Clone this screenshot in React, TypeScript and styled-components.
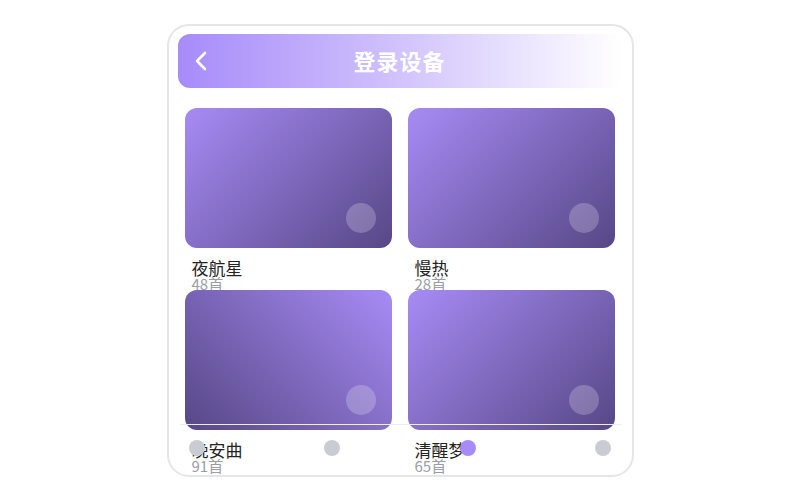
import styled, { createGlobalStyle } from "styled-components";

const GlobalStyle = createGlobalStyle`
  html, body {
    margin: 0;
    padding: 0;
    background: #ffffff;
    font-family: "Noto Sans CJK SC", "Noto Sans", sans-serif;
  }
`;

const playlists = [
  { name: "夜航星", count: 48, flip: false },
  { name: "慢热", count: 28, flip: false },
  { name: "晚安曲", count: 91, flip: true },
  { name: "清醒梦", count: 65, flip: false },
];

const tabs = [false, false, true, false];

function App() {
  return (
    <>
      <GlobalStyle />
      <Page>
        <Phone>
          <Header>
            <BackButton>
              <svg width="14" height="22" viewBox="0 0 14 22" fill="none">
                <path
                  d="M11 3L3 11L11 19"
                  stroke="#ffffff"
                  strokeWidth="2.6"
                  strokeLinecap="round"
                  strokeLinejoin="round"
                />
              </svg>
            </BackButton>
            <Title>登录设备</Title>
          </Header>
          <Grid>
            {playlists.map((item) => (
              <Cell key={item.name}>
                <Cover $flip={item.flip}>
                  <PlayDot />
                </Cover>
                <Name>{item.name}</Name>
                <Count>{item.count}首</Count>
              </Cell>
            ))}
          </Grid>
          <TabBar>
            {tabs.map((active, i) => (
              <TabDot key={i} $active={active} />
            ))}
          </TabBar>
        </Phone>
      </Page>
    </>
  );
}

export default App;

const Page = styled.div`
  width: 800px;
  height: 500px;
  display: flex;
  justify-content: center;
  padding-top: 24px;
  box-sizing: border-box;
`;

const Phone = styled.div`
  position: relative;
  width: 467px;
  height: 453px;
  box-sizing: border-box;
  border: 2px solid #e6e6ea;
  border-radius: 22px;
  overflow: hidden;
  background: #ffffff;
  padding: 8px 10px 0 9px;
`;

const Header = styled.div`
  position: relative;
  height: 54px;
  border-radius: 12px;
  background: linear-gradient(90deg, #a78bfa 0%, #cdbdfc 45%, #ffffff 100%);
  display: flex;
  align-items: center;
  justify-content: center;
`;

const BackButton = styled.div`
  position: absolute;
  left: 16px;
  top: 16px;
  width: 14px;
  height: 22px;
  display: flex;
`;

const Title = styled.h1`
  margin: 0;
  color: #ffffff;
  font-size: 22px;
  font-weight: 700;
  letter-spacing: 1px;
  line-height: 1;
  padding-bottom: 2px;
`;

const Grid = styled.div`
  display: grid;
  grid-template-columns: 207px 207px;
  column-gap: 16px;
  padding: 20px 0 0 7px;
`;

const Cell = styled.div`
  display: flex;
  flex-direction: column;
`;

const Cover = styled.div<{ $flip: boolean }>`
  position: relative;
  height: 140px;
  border-radius: 12px;
  background: ${(p) =>
    p.$flip
      ? "linear-gradient(225deg, #a78bf5 0%, #574786 100%)"
      : "linear-gradient(135deg, #a78bf5 0%, #574786 100%)"};
`;

const PlayDot = styled.div`
  position: absolute;
  right: 16px;
  bottom: 15px;
  width: 30px;
  height: 30px;
  border-radius: 50%;
  background: rgba(255, 255, 255, 0.22);
`;

const Name = styled.div`
  margin-top: 10px;
  padding-left: 7px;
  font-size: 17px;
  line-height: 20px;
  color: #222222;
`;

const Count = styled.div`
  padding-left: 7px;
  font-size: 15px;
  line-height: 12px;
  height: 12px;
  color: #9a9da6;
`;

const TabBar = styled.div`
  position: absolute;
  left: 11px;
  right: 10px;
  top: 398px;
  height: 46px;
  border-top: 1px solid #eeeef2;
  display: flex;
  align-items: center;
  justify-content: space-between;
  padding: 0 10px 0 9px;
`;

const TabDot = styled.div<{ $active: boolean }>`
  width: 16px;
  height: 16px;
  border-radius: 50%;
  background: ${(p) => (p.$active ? "#a78bfa" : "#c9ccd2")};
`;
